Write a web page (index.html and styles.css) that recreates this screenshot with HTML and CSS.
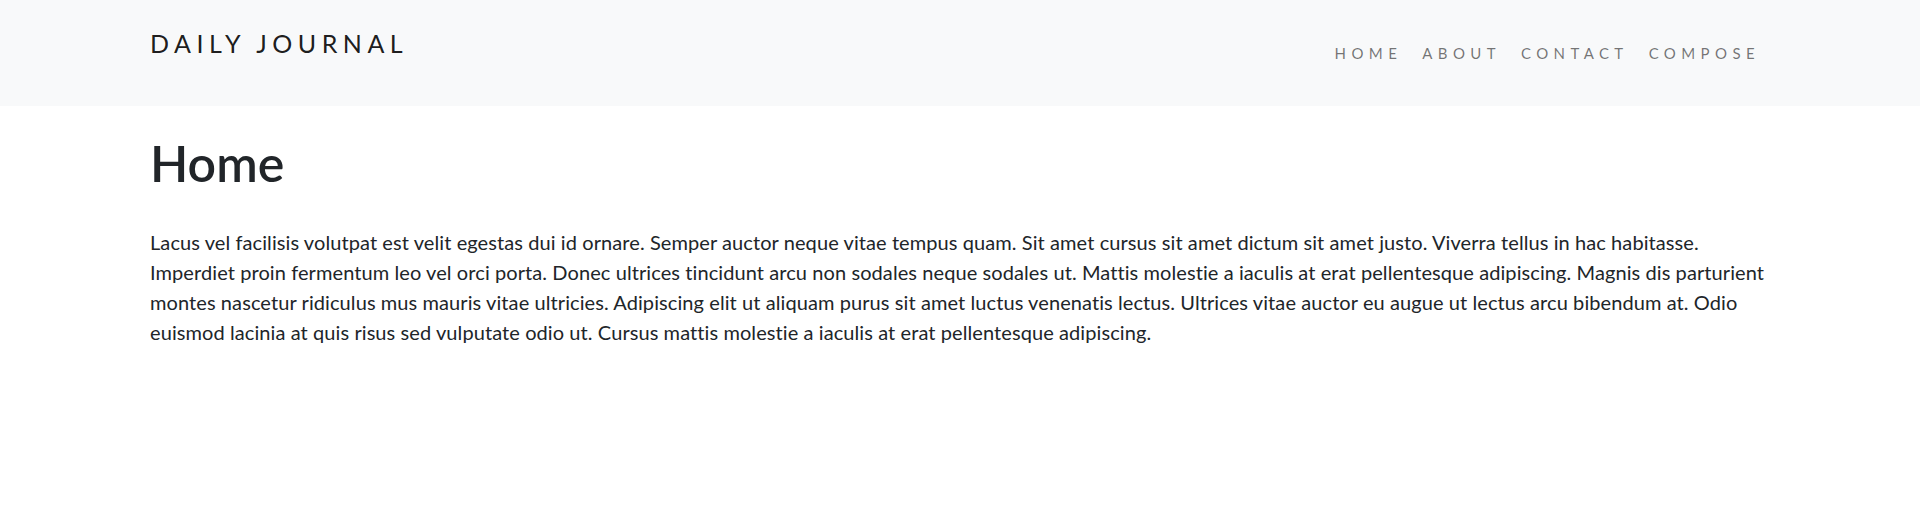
FILE: index.html
```html
<!DOCTYPE html>
<html lang="en">
<head>
<meta charset="utf-8">
<title>Daily Journal</title>
<link rel="stylesheet" href="styles.css">
</head>
<body>
<header class="navbar">
  <div class="container nav-inner">
    <a class="brand" href="#">DAILY JOURNAL</a>
    <ul class="nav-links">
      <li><a href="#">HOME</a></li>
      <li><a href="#">ABOUT</a></li>
      <li><a href="#">CONTACT</a></li>
      <li><a href="#">COMPOSE</a></li>
    </ul>
  </div>
</header>
<main class="container">
  <h1 class="title">Home</h1>
  <p class="body-text">Lacus vel facilisis volutpat est velit egestas dui id ornare. Semper auctor neque vitae tempus quam. Sit amet cursus sit amet dictum sit amet justo. Viverra tellus in hac habitasse. Imperdiet proin fermentum leo vel orci porta. Donec ultrices tincidunt arcu non sodales neque sodales ut. Mattis molestie a iaculis at erat pellentesque adipiscing. Magnis dis parturient montes nascetur ridiculus mus mauris vitae ultricies. Adipiscing elit ut aliquam purus sit amet luctus venenatis lectus. Ultrices vitae auctor eu augue ut lectus arcu bibendum at. Odio euismod lacinia at quis risus sed vulputate odio ut. Cursus mattis molestie a iaculis at erat pellentesque adipiscing.</p>
</main>
</body>
</html>
```
FILE: styles.css
```css
* { box-sizing: border-box; }
body {
  margin: 0;
  font-family: Lato, "Open Sans", sans-serif;
  color: #212529;
  background: #fff;
}
.container {
  width: 1650px;
  margin: 0 auto;
  padding: 0 15px;
}
.navbar {
  background: #f8f9fa;
  height: 106px;
}
.nav-inner {
  display: flex;
  justify-content: space-between;
  align-items: flex-start;
}
.brand {
  margin-top: 25px;
  font-size: 25px;
  line-height: 37px;
  letter-spacing: 5.5px;
  color: rgba(0,0,0,.9);
  text-decoration: none;
}
.nav-links {
  list-style: none;
  display: flex;
  margin: 41px 0 0;
  padding: 0;
}
.nav-links a {
  display: block;
  padding: 0 10px;
  font-size: 15px;
  line-height: 24px;
  letter-spacing: 5.4px;
  color: rgba(0,0,0,.55);
  text-decoration: none;
}
.title {
  margin: 0;
  padding-top: 27px;
  font-size: 50px;
  font-weight: 600;
  line-height: 60px;
}
.body-text {
  margin: 34px -6px 0 0;
  font-size: 20px;
  line-height: 30px;
  letter-spacing: 0.085px;
}
```
